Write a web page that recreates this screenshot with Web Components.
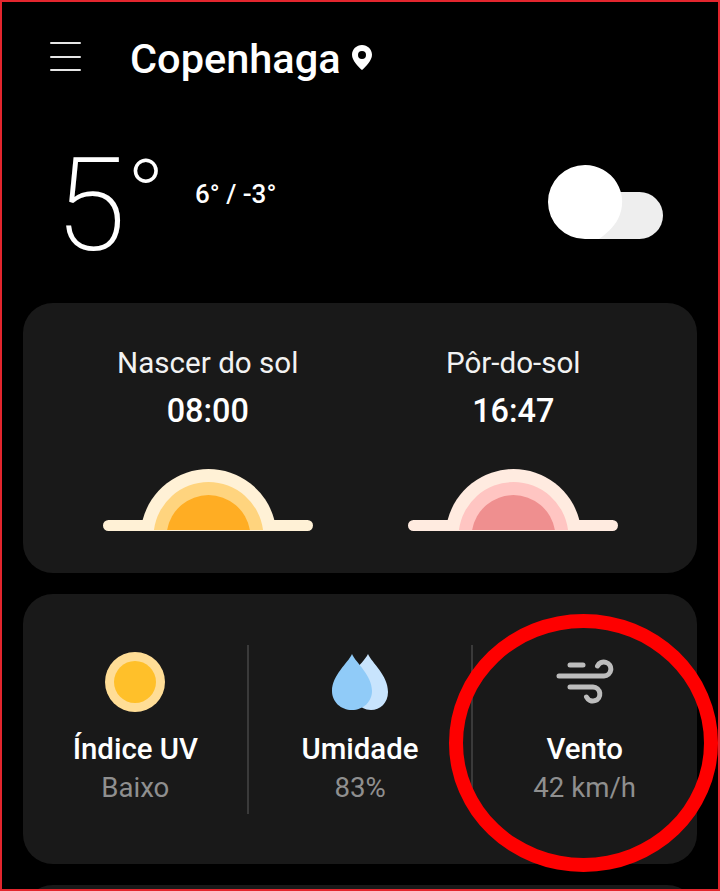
<!DOCTYPE html>
<html lang="pt">
<head>
<meta charset="utf-8">
<title>Copenhaga</title>
<style>
  html, body { margin: 0; background: #000; }
  body { font-family: Roboto, "Liberation Sans", sans-serif; color: #fff; }
</style>
</head>
<body>
<weather-app>
  <app-header>Copenhaga</app-header>
  <temp-row now="5" range="6° / -3°"></temp-row>
  <wx-card class="sun">
    <sun-event label="Nascer do sol" time="08:00" c1="#fff1d6" c2="#ffd47e" c3="#ffad23"></sun-event>
    <sun-event label="Pôr-do-sol" time="16:47" c1="#ffebe0" c2="#ffc5c2" c3="#ef8f8f"></sun-event>
  </wx-card>
  <wx-card class="metrics">
    <metric-item label="Índice UV" value="Baixo" icon="uv"></metric-item>
    <metric-item label="Umidade" value="83%" icon="drops"></metric-item>
    <metric-item label="Vento" value="42 km/h" icon="wind"></metric-item>
  </wx-card>
  <wx-card class="peek"></wx-card>
</weather-app>

<script>
class WeatherApp extends HTMLElement {
  constructor() {
    super();
    this.root = this.attachShadow({ mode: "open" });
    this.root.innerHTML = `
      <style>
        :host { display: block; position: relative; width: 720px; height: 891px; overflow: hidden; background: #000; }
        .cards { display: flex; flex-direction: column; gap: 21px; padding: 0 23px; }
        .frame { position: absolute; inset: 0; border: 2px solid #e3262e; pointer-events: none; }
        .ring { position: absolute; left: 449px; top: 614px; width: 269px; height: 258px; box-sizing: border-box;
                border: 14px solid #fe0000; border-radius: 50%; pointer-events: none; }
      </style>
      <slot name="head"></slot>
      <div class="cards"><slot></slot></div>
      <div class="ring"></div>
      <div class="frame"></div>
    `;
  }
  connectedCallback() {
    this.querySelector("app-header").slot = "head";
    this.querySelector("temp-row").slot = "head";
  }
}

class AppHeader extends HTMLElement {
  constructor() {
    super();
    this.root = this.attachShadow({ mode: "open" });
    this.root.innerHTML = `
      <style>
        :host { display: flex; align-items: center; height: 118px; padding-left: 50px; }
        .menu { width: 31px; height: 29px; flex: none; margin: -5px 49px 0 0; display: flex; flex-direction: column; justify-content: space-between; }
        .menu i { display: block; height: 2px; background: #e6e6e6; border-radius: 1px; }
        h1 { margin: 0; font: 500 41.500px/48px Roboto, "Liberation Sans", sans-serif; color: #fff; }
        svg { margin: -3px 0 0 11px; }
      </style>
      <div class="menu"><i></i><i></i><i></i></div>
      <h1><slot></slot></h1>
      <svg width="20" height="25" viewBox="0 0 20 25"><path fill="#fff" fill-rule="evenodd" d="M10 0C4.500 0 0 4.300 0 9.700 0 15.500 6.200 21.500 10 25c3.800-3.500 10-9.500 10-15.300C20 4.300 15.500 0 10 0zm0 6a4 4 0 1 1 0 8 4 4 0 0 1 0-8z"/></svg>
    `;
  }
}

class TempRow extends HTMLElement {
  constructor() {
    super();
    this.root = this.attachShadow({ mode: "open" });
  }
  connectedCallback() {
    this.root.innerHTML = `
      <style>
        :host { display: flex; height: 185px; padding-left: 53px; }
        .now { display: flex; align-items: flex-start; width: 142px; flex: none; margin-top: 23px;
               font-family: Roboto, "Liberation Sans", sans-serif; font-weight: 200; }
        .digit { font-size: 129px; line-height: 130px; margin-left: 2px; }
        .deg { font-size: 104px; line-height: 104px; margin-top: 5px; }
        .range { font: 500 26px/28px Roboto, "Liberation Sans", sans-serif; margin-top: 62px; }
        svg { margin: 47px 57px 0 auto; flex: none; }
      </style>
      <div class="now"><span class="digit">${this.getAttribute("now")}</span><span class="deg">°</span></div>
      <div class="range">${this.getAttribute("range")}</div>
      <svg width="115" height="75" viewBox="0 0 115 75">
        <rect x="20" y="27" width="95" height="47" rx="23.500" fill="#eeeeee"/>
        <path fill="#fff" d="M37 0a37 37 0 0 1 33 54c-4 8-12 15-19 20H37A37 37 0 0 1 37 0z"/>
      </svg>
    `;
  }
}

class WxCard extends HTMLElement {
  constructor() {
    super();
    this.root = this.attachShadow({ mode: "open" });
    this.root.innerHTML = `
      <style>
        :host { display: grid; box-sizing: border-box; height: 270px; background: #191919; border-radius: 30px; }
        :host(.sun) { grid-template-columns: 1fr 1fr; padding: 0 31px 0 32px; }
        :host(.metrics) { grid-template-columns: 1fr 1fr 1fr; padding: 51px 0 50px; }
      </style>
      <slot></slot>
    `;
  }
}

class SunEvent extends HTMLElement {
  constructor() {
    super();
    this.root = this.attachShadow({ mode: "open" });
  }
  connectedCallback() {
    const c1 = this.getAttribute("c1"), c2 = this.getAttribute("c2"), c3 = this.getAttribute("c3");
    this.root.innerHTML = `
      <style>
        :host { display: flex; flex-direction: column; align-items: center; padding-top: 41px; }
        .label { font: 400 29.600px/38px Roboto, "Liberation Sans", sans-serif; color: #f2f2f2; }
        .time { font: 500 32.400px/38px Roboto, "Liberation Sans", sans-serif; color: #fff; margin-top: 10px; }
        svg { margin-top: 39px; }
      </style>
      <div class="label">${this.getAttribute("label")}</div>
      <div class="time">${this.getAttribute("time")}</div>
      <svg width="210" height="62" viewBox="0 0 210 62">
        <rect x="0" y="51" width="210" height="11" rx="5.500" fill="${c1}"/>
        <path fill="${c1}" d="M39.660 61V51A68 68 0 0 1 171.340 51V61z"/>
        <path fill="${c2}" d="M50.950 61A55 55 0 0 1 160.050 61z"/>
        <path fill="${c3}" d="M64.100 61A42 42 0 0 1 146.900 61z"/>
      </svg>
    `;
  }
}

const METRIC_ICONS = {
  uv: `<svg width="60" height="60" viewBox="0 0 60 60"><circle cx="30" cy="30" r="30" fill="#ffdd96"/><circle cx="30" cy="30" r="21" fill="#ffc02a"/></svg>`,
  drops: `<svg width="56" height="57" viewBox="0 0 56 57">
      <path fill="#c8e4fd" d="M36 0C40 9 56 21 56 38c0 11-8 18-17 18-6 0-11-3-14-8L22 18C27 11 33 6 36 0z"/>
      <path fill="#90cbf8" d="M20 0C24 9 40 21 40 37c0 11-9 19-20 19S0 48 0 37C0 21 16 9 20 0z"/>
    </svg>`,
  wind: `<svg width="60" height="46" viewBox="555 659 60 46" fill="none" stroke="#bdbdbd" stroke-width="5" stroke-linecap="round">
      <path d="M570 665h13"/>
      <path d="M559 676h45a7 7 0 1 0-6.500-10"/>
      <path d="M570 687h23a7 7 0 1 1-6.500 10"/>
    </svg>`
};

class MetricItem extends HTMLElement {
  constructor() {
    super();
    this.root = this.attachShadow({ mode: "open" });
  }
  connectedCallback() {
    this.root.innerHTML = `
      <style>
        :host { display: flex; flex-direction: column; align-items: center; position: relative; }
        :host(:not(:last-child))::after { content: ""; position: absolute; right: -1px; top: 0; bottom: 0; width: 2px; background: #3a3a3a; }
        .icon { height: 60px; display: flex; align-items: center; margin-top: 7px; }
        .label { font: 500 29.400px/36px Roboto, "Liberation Sans", sans-serif; color: #fff; margin-top: 19px; }
        .value { font: 400 27.600px/36px Roboto, "Liberation Sans", sans-serif; color: #8f8f8f; margin-top: 3px; }
      </style>
      <div class="icon">${METRIC_ICONS[this.getAttribute("icon")]}</div>
      <div class="label">${this.getAttribute("label")}</div>
      <div class="value">${this.getAttribute("value")}</div>
    `;
  }
}

customElements.define("weather-app", WeatherApp);
customElements.define("app-header", AppHeader);
customElements.define("temp-row", TempRow);
customElements.define("wx-card", WxCard);
customElements.define("sun-event", SunEvent);
customElements.define("metric-item", MetricItem);
</script>
</body>
</html>
